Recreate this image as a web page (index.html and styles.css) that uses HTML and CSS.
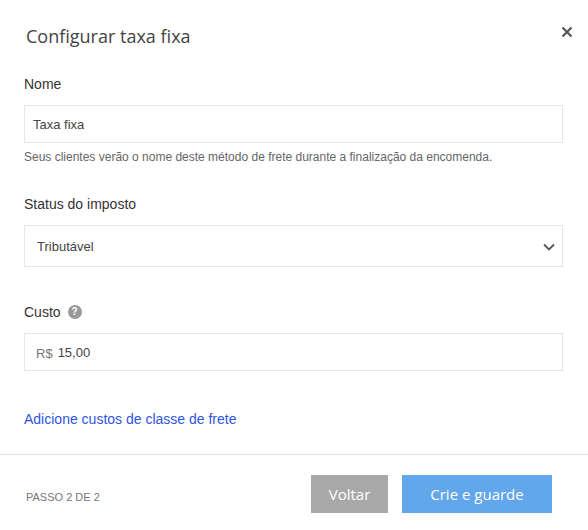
FILE: index.html
```html
<!DOCTYPE html>
<html lang="pt">
<head>
  <meta charset="UTF-8" />
  <title>Configurar taxa fixa</title>
  <link rel="stylesheet" href="styles.css">
</head>
<body>

  <div class="modal">
    <div class="modal-header">
      <h2>Configurar taxa fixa</h2>
      <button class="close-btn" aria-label="Fechar">
        <svg width="12" height="12" viewBox="0 0 12 12"><path d="M1.5 1.5l9 9M10.5 1.5l-9 9" stroke="#555" stroke-width="2.2" fill="none"/></svg>
      </button>
    </div>

    <div class="modal-body">
      <div class="field field-name">
        <label>Nome</label>
        <div class="input-box">Taxa fixa</div>
        <p class="hint">Seus clientes verão o nome deste método de frete durante a finalização da encomenda.</p>
      </div>

      <div class="field field-tax">
        <label>Status do imposto</label>
        <div class="select-box">
          <span>Tributável</span>
          <svg width="12" height="8" viewBox="0 0 12 8"><path d="M1 1.5l5 5 5-5" stroke="#555" stroke-width="1.8" fill="none"/></svg>
        </div>
      </div>

      <div class="field field-cost">
        <label>Custo <span class="help">?</span></label>
        <div class="input-box"><span class="currency">R$</span><span class="amount">15,00</span></div>
      </div>

      <a class="class-link" href="#">Adicione custos de classe de frete</a>
    </div>

    <div class="modal-footer">
      <span class="step">PASSO 2 DE 2</span>
      <div class="actions">
        <button class="button back">Voltar</button>
        <button class="button save">Crie e guarde</button>
      </div>
    </div>
  </div>

</body>
</html>
```

FILE: styles.css
```css
* {
  box-sizing: border-box;
}

body {
  margin: 0;
  background: #fff;
  color: #333;
  font-family: "Liberation Sans", Arial, sans-serif;
}

.modal {
  width: 588px;
  height: 530px;
  display: flex;
  flex-direction: column;
}

.modal-header {
  height: 74px;
  padding: 24px 15px 0 26px;
  display: flex;
  justify-content: space-between;
  align-items: flex-start;
}

.modal-header h2 {
  margin: 0;
  font-family: "Open Sans", sans-serif;
  font-size: 18px;
  font-weight: 400;
  line-height: 25px;
  color: #444;
}

.close-btn {
  background: none;
  border: none;
  padding: 0;
  margin-top: 2px;
  width: 13px;
  height: 13px;
  cursor: pointer;
}

.modal-body {
  flex: 1;
  padding: 0 25px 0 24px;
}

.field label {
  display: flex;
  align-items: center;
  gap: 7px;
  height: 20px;
  font-size: 14px;
  color: #333;
}

.input-box {
  height: 38px;
  margin-top: 11px;
  padding: 1px 8px 0;
  border: 1px solid #e6e6e6;
  display: flex;
  align-items: center;
  font-size: 13px;
  color: #444;
}

.select-box {
  height: 42px;
  margin-top: 11px;
  padding: 1px 7px 0 12px;
  border: 1px solid #e6e6e6;
  display: flex;
  align-items: center;
  justify-content: space-between;
  font-size: 13px;
  color: #444;
}

.hint {
  margin: 7px 0 0;
  font-size: 12px;
  line-height: 14px;
  color: #666;
}

.field-tax {
  margin-top: 30px;
}

.field-cost {
  margin-top: 35px;
}

.help {
  width: 14px;
  height: 14px;
  border-radius: 50%;
  background: #999;
  color: #fff;
  font-size: 10px;
  font-weight: bold;
  line-height: 14px;
  text-align: center;
}

.currency {
  margin-left: 3px;
  margin-top: 2px;
  font-size: 13px;
  color: #777;
}

.amount {
  margin-left: 5px;
}

.class-link {
  display: block;
  margin-top: 39px;
  font-size: 14px;
  line-height: 18px;
  color: #2f55e0;
  text-decoration: none;
}

.modal-footer {
  height: 76px;
  padding: 20px 36px 0 26px;
  border-top: 1px solid #e3e3e3;
  display: flex;
  justify-content: space-between;
  align-items: flex-start;
}

.step {
  margin-top: 15px;
  font-size: 11px;
  line-height: 14px;
  color: #777;
}

.actions {
  display: flex;
  gap: 14px;
}

.button {
  height: 38px;
  border: none;
  color: #fff;
  font-family: "Open Sans", sans-serif;
  font-size: 15px;
  cursor: pointer;
}

.back {
  width: 77px;
  background: #a8a8a8;
}

.save {
  width: 150px;
  background: #62a6eb;
}
```
